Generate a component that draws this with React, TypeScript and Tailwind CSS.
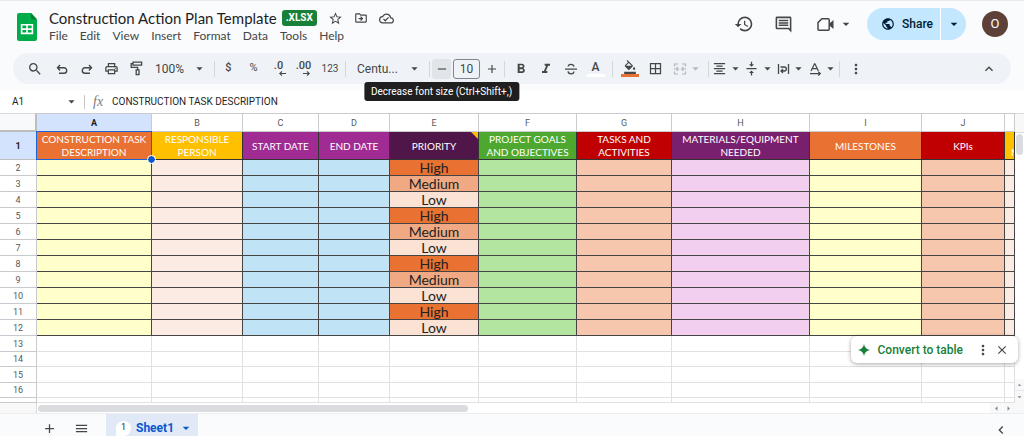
import React from "react";
import {
  MdAdd,
  MdArrowDropDown,
  MdArrowDropUp,
  MdArrowLeft,
  MdArrowRight,
  MdBorderAll,
  MdChevronLeft,
  MdClose,
  MdFormatAlignCenter,
  MdFormatBold,
  MdFormatColorFill,
  MdFormatItalic,
  MdHistory,
  MdKeyboardArrowUp,
  MdMenu,
  MdMoreVert,
  MdOutlineCloudDone,
  MdOutlineComment,
  MdOutlineDriveFileMove,
  MdOutlinePrint,
  MdPublic,
  MdRemove,
  MdSearch,
  MdStarBorder,
  MdVerticalAlignCenter,
} from "react-icons/md";

type Column = {
  letter: string;
  title: string[];
  width: string;
  head: string;
  body: string;
};

const columns: Column[] = [
  { letter: "A", title: ["CONSTRUCTION TASK", "DESCRIPTION"], width: "w-[115px]", head: "bg-[#e97132]", body: "bg-[#ffffcc]" },
  { letter: "B", title: ["RESPONSIBLE", "PERSON"], width: "w-[91px]", head: "bg-[#ffc000]", body: "bg-[#fbebe2]" },
  { letter: "C", title: ["START DATE"], width: "w-[76px]", head: "bg-[#a02b93]", body: "bg-[#c0e4f5]" },
  { letter: "D", title: ["END DATE"], width: "w-[71px]", head: "bg-[#a02b93]", body: "bg-[#c0e4f5]" },
  { letter: "E", title: ["PRIORITY"], width: "w-[89px]", head: "bg-[#501549]", body: "" },
  { letter: "F", title: ["PROJECT GOALS", "AND OBJECTIVES"], width: "w-[98px]", head: "bg-[#4ea72e]", body: "bg-[#b3e5a1]" },
  { letter: "G", title: ["TASKS AND", "ACTIVITIES"], width: "w-[95px]", head: "bg-[#c00000]", body: "bg-[#f6c6ad]" },
  { letter: "H", title: ["MATERIALS/EQUIPMENT", "NEEDED"], width: "w-[138px]", head: "bg-[#78206e]", body: "bg-[#f2ceef]" },
  { letter: "I", title: ["MILESTONES"], width: "w-[112px]", head: "bg-[#e97132]", body: "bg-[#ffffcc]" },
  { letter: "J", title: ["KPIs"], width: "w-[83px]", head: "bg-[#c00000]", body: "bg-[#f6c6ad]" },
  { letter: "", title: ["\u00a0", "M"], width: "", head: "bg-[#ffc000] overflow-hidden pl-[6px]! text-left", body: "bg-[#fbebe2]" },
];

const priorities = ["High", "Medium", "Low", "High", "Medium", "Low", "High", "Medium", "Low", "High", "Low"];

const priorityFill: Record<string, string> = {
  High: "bg-[#e97132]",
  Medium: "bg-[#f1a983]",
  Low: "bg-[#fae2d5]",
};

const emptyRows = [
  { n: "13", h: "h-4" },
  { n: "14", h: "h-[15px]" },
  { n: "15", h: "h-4" },
  { n: "16", h: "h-[15px]" },
  { n: "", h: "h-[5px]" },
];

const menus = ["File", "Edit", "View", "Insert", "Format", "Data", "Tools", "Help"];

function Tool({ label, className = "w-[25px]", children }: { label: string; className?: string; children: React.ReactNode }) {
  return (
    <button aria-label={label} className={`flex h-5 shrink-0 items-center justify-center ${className}`}>
      {children}
    </button>
  );
}

function SplitTool({ label, className = "", children }: { label: string; className?: string; children: React.ReactNode }) {
  return (
    <button aria-label={label} className={`flex h-5 w-8 shrink-0 items-center justify-center gap-px ${className}`}>
      {children}
      <MdArrowDropDown size={15} />
    </button>
  );
}

function Divider({ className = "" }: { className?: string }) {
  return <span className={`h-4 w-px shrink-0 bg-[#d3d7dc] ${className}`} />;
}

function SheetsLogo() {
  return (
    <svg width="20" height="28" viewBox="0 0 20 28">
      <path d="M2 0h12l6 6.5V26a2 2 0 0 1-2 2H2a2 2 0 0 1-2-2V2a2 2 0 0 1 2-2z" fill="#00ac47" />
      <path d="M14 0l6 6.5h-4.5A1.5 1.5 0 0 1 14 5z" fill="#00832d" />
      <path d="M3.8 11h12.4v10.2H3.8zM5.4 12.6v2.7h3.8v-2.7zm5.4 0v2.7h3.8v-2.7zM5.4 16.9v2.7h3.8v-2.7zm5.4 0v2.7h3.8v-2.7z" fill="#fff" fillRule="evenodd" />
    </svg>
  );
}

function UndoIcon({ flip = false }: { flip?: boolean }) {
  return (
    <svg width="14" height="14" viewBox="0 0 14 14" fill="none" stroke="currentColor" strokeWidth="1.4" className={flip ? "-scale-x-100" : ""}>
      <path d="M5 3 2.5 5.7 5 8.4M2.7 5.7h6.2a2.8 2.8 0 0 1 0 5.6H4" />
    </svg>
  );
}

function RollerIcon() {
  return (
    <svg width="14" height="15" viewBox="0 0 14 15" fill="none" stroke="currentColor" strokeWidth="1.3">
      <path d="M3 1.2h8.6v3H3zM3 2.7H1.2v3.7h6.4v2.4M6.2 8.8H9v4.9H6.2z" />
    </svg>
  );
}

function DecimalIcon({ text, right = false }: { text: string; right?: boolean }) {
  return (
    <span className="flex flex-col items-center leading-none">
      <span className="text-[11px] leading-[10px] font-medium">{text}</span>
      <svg width="14" height="5" viewBox="0 0 14 5" fill="none" stroke="currentColor" strokeWidth="1.1">
        {right ? <path d="M6 2.5h6M10 .4l2.2 2.1L10 4.6" /> : <path d="M8 2.5h6M10 .4 7.8 2.5 10 4.6" />}
      </svg>
    </span>
  );
}

function StrikeIcon() {
  return (
    <svg width="14" height="14" viewBox="0 0 14 14" fill="none" stroke="currentColor" strokeWidth="1.3">
      <path d="M1 7.2h12M10 4.6C9.7 3 8.6 2.3 7 2.3S4.2 3.2 4.2 4.6M4 9.4c.2 1.6 1.4 2.4 3 2.4s2.9-.9 2.9-2.4" />
    </svg>
  );
}

function MergeIcon() {
  return (
    <svg width="14" height="14" viewBox="0 0 14 14" fill="none" stroke="currentColor" strokeWidth="1.2">
      <path d="M5 2H1.5v2.5M1.5 9.5V12H5M9 2h3.5v2.5M12.5 9.5V12H9M.8 7h4.4M3.6 5.2 5.4 7 3.6 8.8M13.2 7H8.8M10.4 5.2 8.6 7l1.8 1.8" />
    </svg>
  );
}

function OverflowIcon() {
  return (
    <svg width="13" height="14" viewBox="0 0 13 14" fill="none" stroke="currentColor" strokeWidth="1.3">
      <path d="M1.5 2v10M11.5 2v10M3.5 5h3.8a1.9 1.9 0 0 1 0 4H4.5M6 7 4 9l2 2" />
    </svg>
  );
}

function RotationIcon() {
  return (
    <svg width="13" height="14" viewBox="0 0 13 14" fill="none" stroke="currentColor" strokeWidth="1.2">
      <path d="M2 9 5.5 1.8h.4L9.4 9M3.2 6.7h5M1 11.6h10M9.3 9.7l2 1.9-2 1.9" />
    </svg>
  );
}

function MeetIcon() {
  return (
    <svg width="17" height="15" viewBox="0 0 17 15">
      <path d="M4.8 1.8h6.4a1 1 0 0 1 1 1v9.4a1 1 0 0 1-1 1H2a1 1 0 0 1-1-1V5.6z" fill="none" stroke="currentColor" strokeWidth="1.5" strokeLinejoin="round" />
      <path d="M12.6 6.3 16.5 3v9l-3.9-3.3z" fill="currentColor" />
    </svg>
  );
}

function Header() {
  return (
    <header className="flex items-start border-t border-[#e9ebe6] pt-[7px] pr-4 pl-[17px] text-[#444746]">
      <div className="pt-[5px]">
        <SheetsLogo />
      </div>
      <div className="ml-3 flex flex-col">
        <div className="flex h-5 items-center">
          <h1 className="font-['Lato',sans-serif] text-[15px] leading-5 text-[#1f1f1f]">Construction Action Plan Template</h1>
          <span className="ml-[5px] rounded-[3px] bg-[#188038] px-1 text-[10px] leading-4 font-bold text-white">.XLSX</span>
          <button aria-label="Star" className="ml-[11px]"><MdStarBorder size={15} /></button>
          <button aria-label="Move" className="ml-[11px]"><MdOutlineDriveFileMove size={14} /></button>
          <button aria-label="Document status" className="ml-[11px]"><MdOutlineCloudDone size={15} /></button>
        </div>
        <nav className="flex gap-3">
          {menus.map((m) => (
            <button key={m} className="font-['Lato',sans-serif] text-[12px] leading-4">{m}</button>
          ))}
        </nav>
      </div>
      <div className="ml-auto flex h-8 items-center">
        <button aria-label="Version history"><MdHistory size={20} /></button>
        <button aria-label="Comments" className="ml-5"><MdOutlineComment size={19} /></button>
        <button aria-label="Join a call" className="ml-6 flex items-center gap-1">
          <MeetIcon />
          <MdArrowDropDown size={16} />
        </button>
        <div className="ml-[13px] flex h-8 items-center rounded-full bg-[#c2e7ff] text-[#001d35]">
          <button className="flex h-8 items-center gap-[7px] pr-[7px] pl-[14px] text-[12px] font-medium">
            <MdPublic size={14} />
            Share
          </button>
          <button aria-label="Share options" className="flex h-8 w-[26px] items-center justify-center border-l border-white">
            <MdArrowDropDown size={16} />
          </button>
        </div>
        <button aria-label="Account" className="ml-4 size-[26px] rounded-full bg-[#5d4037] text-[13px] text-white">O</button>
      </div>
    </header>
  );
}

function Toolbar() {
  return (
    <div className="mx-[13px] mt-[9px] mb-[7px] flex h-[31px] items-center rounded-full bg-[#eff3f8] pl-[9px] text-[#444746]" role="toolbar">
      <Tool label="Search the menus"><MdSearch size={16} /></Tool>
      <Tool label="Undo" className="ml-0.5 w-[25px]"><UndoIcon /></Tool>
      <Tool label="Redo"><UndoIcon flip /></Tool>
      <Tool label="Print"><MdOutlinePrint size={15} /></Tool>
      <Tool label="Paint format"><RollerIcon /></Tool>
      <div className="relative flex w-[65px] shrink-0 items-center">
        <select aria-label="Zoom" className="w-full appearance-none bg-transparent pl-[6px] text-[12px]">
          <option>100%</option>
        </select>
        <MdArrowDropDown size={15} className="pointer-events-none absolute right-[7px]" />
      </div>
      <Divider />
      <Tool label="Format as currency" className="ml-px w-[25px]"><span className="text-[11px] font-medium">$</span></Tool>
      <Tool label="Format as percent"><span className="text-[11px]">%</span></Tool>
      <Tool label="Decrease decimal places"><DecimalIcon text=".0" /></Tool>
      <Tool label="Increase decimal places"><DecimalIcon text=".00" right /></Tool>
      <Tool label="More formats" className="w-7"><span className="text-[10px]">123</span></Tool>
      <Divider className="ml-px" />
      <div className="relative flex w-[83px] shrink-0 items-center">
        <select aria-label="Font" className="w-full appearance-none bg-transparent pl-[11px] text-[12px]">
          <option>Centu...</option>
        </select>
        <MdArrowDropDown size={15} className="pointer-events-none absolute right-[7px]" />
      </div>
      <Divider />
      <div className="relative ml-0.5 flex">
        <Tool label="Decrease font size" className="w-[19px] rounded-[3px] bg-[#e1e5ea]"><MdRemove size={14} /></Tool>
        <div role="tooltip" className="absolute top-[23px] left-1/2 z-20 -translate-x-1/2 rounded-[3px] bg-[#1f1f1f] px-[7px] text-[10px] leading-[19px] whitespace-nowrap text-white">
          Decrease font size (Ctrl+Shift+,)
        </div>
      </div>
      <input aria-label="Font size" defaultValue="10" className="mx-0.5 h-5 w-[27px] shrink-0 rounded-[3px] border border-[#80868b] text-center text-[12px]" />
      <Tool label="Increase font size" className="w-[19px]"><MdAdd size={14} /></Tool>
      <Divider className="mx-[3px]" />
      <Tool label="Bold"><MdFormatBold size={16} /></Tool>
      <Tool label="Italic"><MdFormatItalic size={16} /></Tool>
      <Tool label="Strikethrough"><StrikeIcon /></Tool>
      <Tool label="Text color">
        <span className="flex w-[18px] flex-col items-center text-[12px] leading-3 font-medium">
          A
          <span className="mt-px h-[3px] w-full bg-white" />
        </span>
      </Tool>
      <Divider className="mx-1" />
      <Tool label="Fill color">
        <span className="flex w-[18px] flex-col items-center">
          <MdFormatColorFill size={14} />
          <span className="h-[3px] w-full bg-[#e97132]" />
        </span>
      </Tool>
      <Tool label="Borders" className="ml-px w-[25px]"><MdBorderAll size={15} /></Tool>
      <SplitTool label="Merge cells" className="mx-1 text-[#b4b7bb]"><MergeIcon /></SplitTool>
      <Divider />
      <SplitTool label="Horizontal align" className="ml-0.5"><MdFormatAlignCenter size={15} /></SplitTool>
      <SplitTool label="Vertical align"><MdVerticalAlignCenter size={15} /></SplitTool>
      <SplitTool label="Text wrapping"><OverflowIcon /></SplitTool>
      <SplitTool label="Text rotation"><RotationIcon /></SplitTool>
      <Divider className="mr-[3px]" />
      <Tool label="More"><MdMoreVert size={16} /></Tool>
      <Tool label="Hide the menus" className="mr-[10px] ml-auto w-[25px]"><MdKeyboardArrowUp size={16} /></Tool>
    </div>
  );
}

function FormulaBar() {
  return (
    <div className="flex h-[22px] items-center bg-white pb-px text-[#1f1f1f]">
      <input aria-label="Name box" defaultValue="A1" className="w-[54px] pl-3 text-[10px]" />
      <button aria-label="Named ranges" className="ml-[10px] text-[#444746]"><MdArrowDropDown size={15} /></button>
      <span className="ml-[5px] h-[14px] w-px bg-[#c7c7c7]" />
      <span className="ml-2 w-[19px] font-['Liberation_Serif',serif] text-[14px] leading-4 text-[#7a7d80] italic">fx</span>
      <input aria-label="Formula" defaultValue="CONSTRUCTION TASK DESCRIPTION" className="min-w-0 flex-1 text-[10px]" />
    </div>
  );
}

function Grid() {
  return (
    <div className="flex bg-white">
      <div className="min-w-0 flex-1 overflow-hidden">
        <table className="w-full table-fixed border-separate border-spacing-0 text-center">
          <colgroup>
            <col className="w-[37px]" />
            {columns.map((c, i) => (
              <col key={i} className={c.width} />
            ))}
          </colgroup>
          <thead>
            <tr className="text-[9px] leading-3 text-[#575a5a]">
              <td className="h-[19px] border-t border-r-2 border-b-2 border-t-[#d9d9d9] border-r-[#bdbdbd] border-b-[#bdbdbd] bg-[#f8f9fa] p-0" />
              {columns.map((c, i) => (
                <th key={i} scope="col" className={`h-[19px] border-t border-r border-b border-[#c9cbcd] p-0 ${i === 0 ? "bg-[#d3e3fd] font-bold text-[#1f1f1f]" : "font-normal"}`}>
                  {c.letter}
                </th>
              ))}
            </tr>
          </thead>
          <tbody>
            <tr>
              <th scope="row" className="h-[27px] border-r border-b border-[#c0c0c0] bg-[#d3e3fd] p-0 text-[9px] leading-3 font-bold text-[#1f1f1f]">1</th>
              {columns.map((c, i) => (
                <td
                  key={i}
                  className={`relative h-[27px] border-r border-b border-[#333333] p-0 pt-px font-['Lato','Open_Sans',sans-serif] text-[10px] leading-[13px] whitespace-nowrap text-white ${c.head}`}
                >
                  {c.title.map((t) => (
                    <div key={t}>{t}</div>
                  ))}
                  {c.letter === "A" && (
                    <>
                      <span className="absolute -top-px -right-px -bottom-px -left-px border border-[#1a63d8]" />
                      <span className="absolute -right-1 -bottom-1 z-10 size-[7px] rounded-full bg-[#0b57d0] outline outline-white" />
                    </>
                  )}
                  {c.letter === "E" && (
                    <svg width="7" height="7" viewBox="0 0 7 7" className="absolute top-0 right-0">
                      <path d="M0 0h7v7z" fill="#fbbc04" />
                    </svg>
                  )}
                </td>
              ))}
            </tr>
            {priorities.map((p, r) => (
              <tr key={r}>
                <th scope="row" className="h-4 border-r border-b border-[#c8cacc] p-0 text-[9px] leading-3 font-normal text-[#575a5a]">{r + 2}</th>
                {columns.map((c, i) => (
                  <td
                    key={i}
                    className={`h-4 border-r border-b border-[#454545] p-0 font-['Lato','Open_Sans',sans-serif] text-[14px] leading-[15px] text-[#222222] ${c.letter === "E" ? priorityFill[p] : c.body}`}
                  >
                    {c.letter === "E" ? p : null}
                  </td>
                ))}
              </tr>
            ))}
            {emptyRows.map((row, r) => (
              <tr key={r}>
                <th scope="row" className={`border-r border-b border-[#c8cacc] p-0 text-[9px] leading-3 font-normal text-[#575a5a] ${row.h}`}>{row.n}</th>
                {columns.map((_, i) => (
                  <td key={i} className={`border-r border-b border-[#e1e1e1] p-0 ${row.h}`} />
                ))}
              </tr>
            ))}
          </tbody>
        </table>
      </div>
      <div className="flex w-[9px] flex-col items-center border-t border-[#d9d9d9]">
        <div className="h-[19px] w-full border-b border-[#d9d9d9] bg-[#f8f8f8]" />
        <div className="mt-px h-[21px] w-[7px] rounded-full bg-[#dadce0]" />
        <div className="mt-auto flex w-full flex-col items-center bg-[#f8f8f8] text-[#80868b]">
          <button aria-label="Scroll up" className="flex h-3 w-full items-center justify-center border-b border-[#e3e8f5]"><MdArrowDropUp size={10} /></button>
          <button aria-label="Scroll down" className="flex h-3 w-full items-center justify-center"><MdArrowDropDown size={10} /></button>
        </div>
      </div>
    </div>
  );
}

function HorizontalScroll() {
  return (
    <div className="flex h-[10px] items-center bg-white">
      <div className="h-full w-[37px] border-r border-[#d9d9d9] bg-[#f8f8f8]" />
      <div className="ml-px h-[7px] w-[42%] rounded-full bg-[#dadce0]" />
      <div className="ml-auto flex h-full bg-[#f8f8f8] text-[#80868b]">
        <button aria-label="Scroll left" className="flex w-3 items-center justify-center"><MdArrowLeft size={11} /></button>
        <button aria-label="Scroll right" className="flex w-3 items-center justify-center border-l border-white"><MdArrowRight size={11} /></button>
        <span className="w-[10px]" />
      </div>
    </div>
  );
}

function ConvertChip() {
  return (
    <div className="absolute right-[6px] bottom-[50px] z-20 flex h-[27px] items-center rounded-md bg-white pr-[9px] pl-[7px] text-[#444746] shadow-[0_1px_4px_rgba(0,0,0,0.35)]">
      <button className="flex items-center gap-2 text-[12px] font-medium text-[#188038]">
        <svg width="12" height="12" viewBox="0 0 12 12">
          <path d="M6 0c.6 3.5 2.5 5.4 6 6-3.5.6-5.4 2.5-6 6-.6-3.5-2.5-5.4-6-6 3.5-.6 5.4-2.5 6-6z" fill="currentColor" />
        </svg>
        Convert to table
      </button>
      <button aria-label="More options" className="ml-3"><MdMoreVert size={16} /></button>
      <button aria-label="Dismiss" className="ml-1"><MdClose size={14} /></button>
    </div>
  );
}

function SheetTabs() {
  return (
    <footer className="flex flex-1 items-stretch border-t border-[#eceff1] text-[#444746]">
      <button aria-label="Add sheet" className="ml-[41px] flex w-4 items-center justify-center pt-1"><MdAdd size={15} /></button>
      <button aria-label="All sheets" className="ml-4 flex w-4 items-center justify-center pt-1"><MdMenu size={15} /></button>
      <div className="ml-[17px] flex items-center bg-[#e1e9f7] pt-1 pr-1 pl-[10px] text-[#0b57d0]">
        <span className="flex size-[15px] items-center justify-center rounded-full rounded-bl-none bg-white text-[9px] text-[#1f1f1f]">1</span>
        <button className="ml-[5px] text-[12px] leading-4 font-bold">Sheet1</button>
        <button aria-label="Sheet options" className="ml-1"><MdArrowDropDown size={16} /></button>
      </div>
      <button aria-label="Show side panel" className="mr-[15px] ml-auto pt-2"><MdChevronLeft size={16} /></button>
    </footer>
  );
}

export default function App() {
  return (
    <div className="relative flex min-h-screen flex-col bg-[#f9fbfd] font-['Roboto','Liberation_Sans',sans-serif]">
      <Header />
      <Toolbar />
      <FormulaBar />
      <div className="relative">
        <Grid />
        <HorizontalScroll />
        <ConvertChip />
      </div>
      <SheetTabs />
    </div>
  );
}
